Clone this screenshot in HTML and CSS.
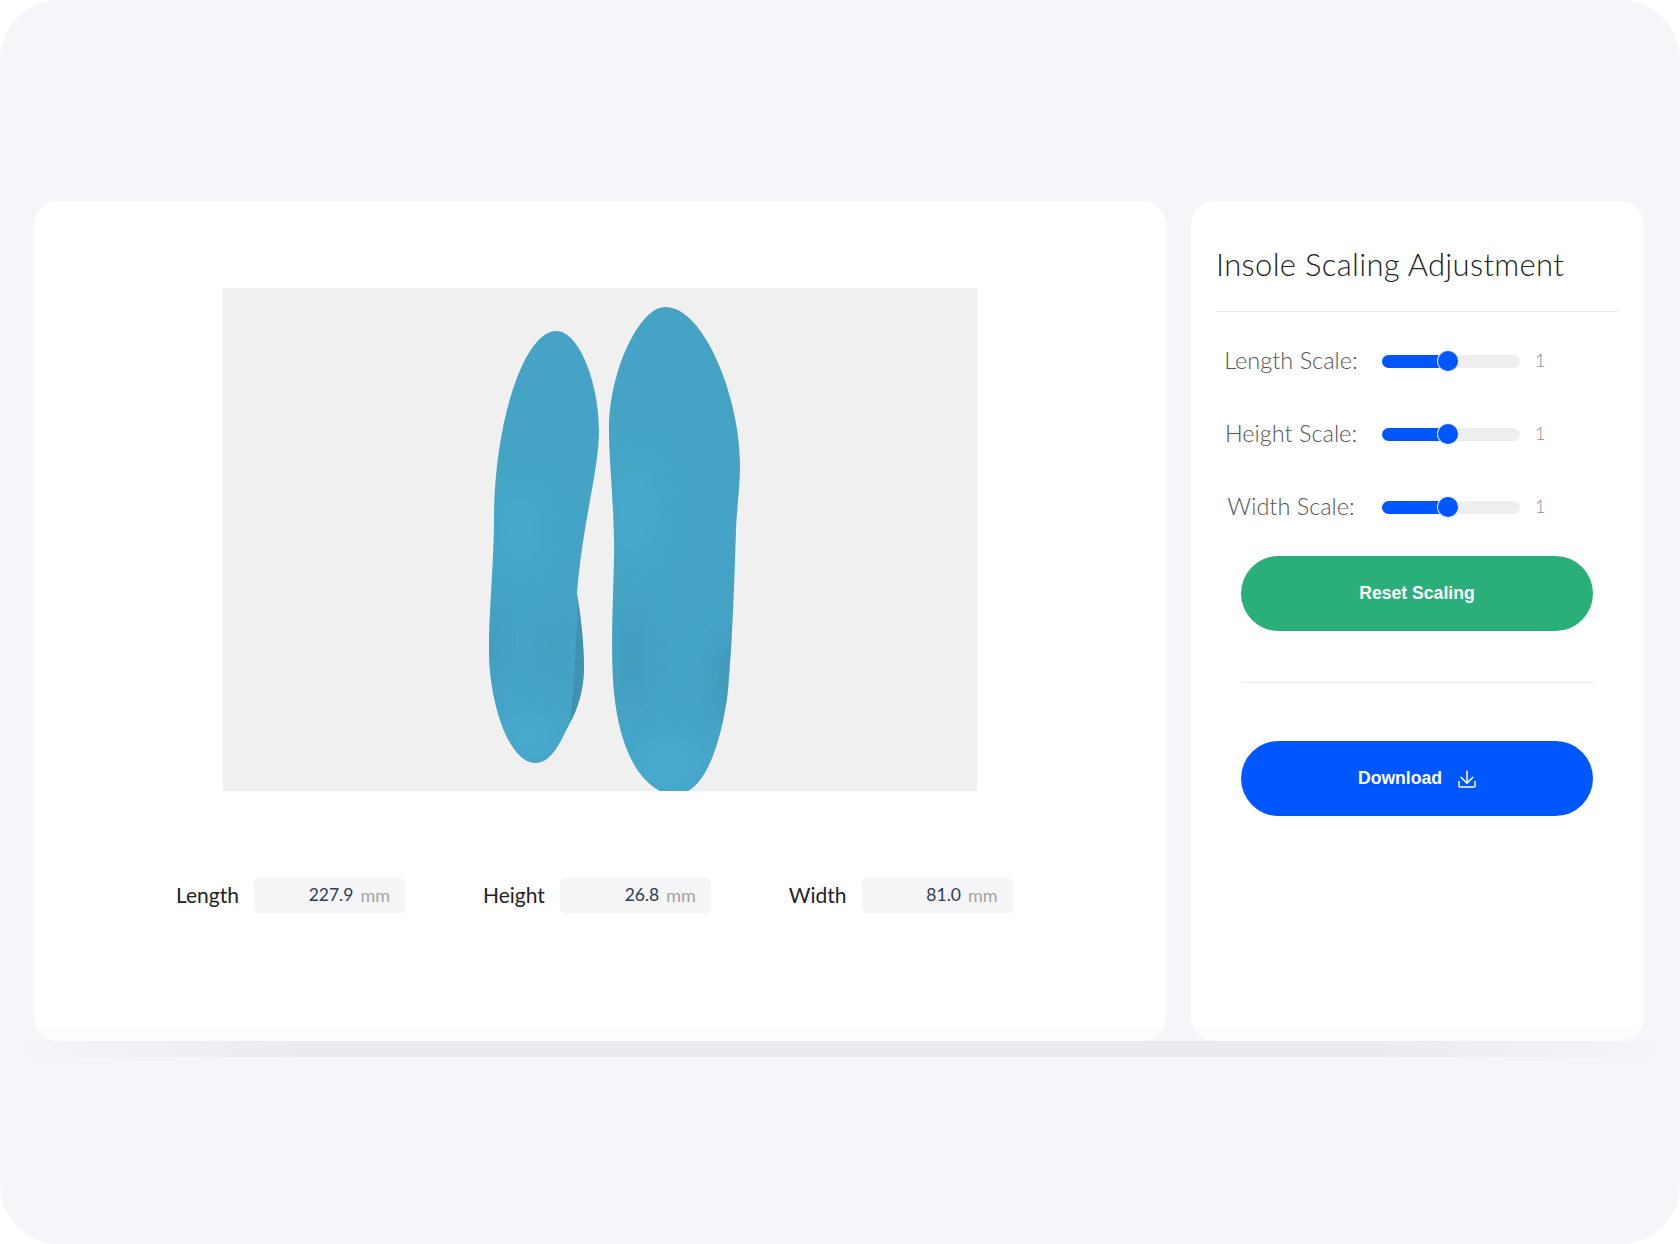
FILE: index.html
```html
<!DOCTYPE html>
<html lang="en">

<head>
    <meta charset="UTF-8" />
    <meta name="viewport" content="width=device-width, initial-scale=1.0" />
    <title>Insole Scaling</title>

    <!-- css -->

    <link rel="stylesheet" href="styles.css">

</head>

<body>
    <div class="frame">

        <main class="viewer-card">
            <div class="preview">
                <svg class="insoles" viewBox="223 288 754 503" width="754" height="503">
                    <defs>
                        <path id="soleLeft" d="M556 331 C580 331 599 385 599 430 C599 470 583 520 577 593 C580 610 584 640 584 667 C584 690 578 708 570 723 C560 742 552 763 535 763 C510 763 489 705 489 650 C489 610 494 560 494 520 C494 420 525 331 556 331 Z" />
                        <path id="soleRight" d="M665 307 C640 307 609 370 609 430 C609 465 615 510 614 560 C613 600 611 640 613 680 C616 730 630 775 660 791 L688 791 C708 780 722 740 728 690 C733 630 734 590 736 530 C737 505 740 490 740 463 C740 400 705 307 665 307 Z" />
                        <clipPath id="soleClip">
                            <use href="#soleLeft" />
                            <use href="#soleRight" />
                        </clipPath>
                        <filter id="soft" x="-50%" y="-50%" width="200%" height="200%">
                            <feGaussianBlur stdDeviation="14" />
                        </filter>
                    </defs>

                    <use href="#soleLeft" fill="#45a4c5" />
                    <use href="#soleRight" fill="#45a4c5" />

                    <!-- light and shade on the soles -->
                    <g clip-path="url(#soleClip)">
                        <g filter="url(#soft)">
                            <ellipse cx="635" cy="510" rx="22" ry="50" fill="#47a9cc" />
                            <ellipse cx="520" cy="530" rx="20" ry="40" fill="#47a9cc" />
                            <ellipse cx="632" cy="655" rx="16" ry="50" fill="#419cbd" />
                            <ellipse cx="732" cy="680" rx="16" ry="50" fill="#3f98b9" />
                            <ellipse cx="490" cy="640" rx="12" ry="40" fill="#419cbd" />
                            <ellipse cx="555" cy="650" rx="10" ry="40" fill="#419cbd" />
                            <ellipse cx="668" cy="765" rx="34" ry="26" fill="#48acd0" />
                            <ellipse cx="530" cy="735" rx="24" ry="20" fill="#48acd0" />
                        </g>
                        <!-- side wall of the left insole -->
                        <path fill="#3f93b0" d="M578 603 C581 620 584 645 584 667 C584 690 578 708 570 723 C573 700 574 680 575 660 C576 640 577 620 578 603 Z" />
                    </g>
                </svg>
            </div>

            <div class="measures">
                <div class="measure">
                    <span class="measure-label">Length</span>
                    <div class="measure-box"><span class="measure-value">227.9</span><span class="measure-unit">mm</span></div>
                </div>
                <div class="measure">
                    <span class="measure-label">Height</span>
                    <div class="measure-box"><span class="measure-value">26.8</span><span class="measure-unit">mm</span></div>
                </div>
                <div class="measure">
                    <span class="measure-label">Width</span>
                    <div class="measure-box"><span class="measure-value">81.0</span><span class="measure-unit">mm</span></div>
                </div>
            </div>
        </main>

        <aside class="side-card">
            <h1 class="side-title">Insole Scaling Adjustment</h1>

            <div class="scale-list">
                <div class="scale-row">
                    <span class="scale-label">Length Scale:</span>
                    <div class="slider"><div class="slider-fill"></div><span class="slider-thumb"></span></div>
                    <span class="scale-value">1</span>
                </div>
                <div class="scale-row">
                    <span class="scale-label">Height Scale:</span>
                    <div class="slider"><div class="slider-fill"></div><span class="slider-thumb"></span></div>
                    <span class="scale-value">1</span>
                </div>
                <div class="scale-row">
                    <span class="scale-label">Width Scale:</span>
                    <div class="slider"><div class="slider-fill"></div><span class="slider-thumb"></span></div>
                    <span class="scale-value">1</span>
                </div>
            </div>

            <div class="actions">
                <button class="pill pill-green">Reset Scaling</button>
                <hr class="actions-line">
                <button class="pill pill-blue">
                    Download
                    <svg class="pill-icon" viewBox="0 0 18 18" width="18" height="18" fill="none" stroke="#fff" stroke-width="1.5" stroke-linecap="round" stroke-linejoin="round">
                        <path d="M9 1 V13" />
                        <path d="M3.2 7.4 L9 13.2 L14.8 7.4" />
                        <path d="M1 11.5 V16 Q1 17 2 17 H16 Q17 17 17 16 V11.5" />
                    </svg>
                </button>
            </div>
        </aside>

    </div>
</body>

</html>
```

FILE: styles.css
```css
* {
    box-sizing: border-box;
}

body {
    margin: 0;
    background-color: #fff;
    font-family: "Lato", "Open Sans", sans-serif;
}

.frame {
    position: relative;
    display: flex;
    gap: 25px;
    width: 1680px;
    height: 1244px;
    padding: 201px 36px 203px 34px;
    background-color: #f4f6fa;
    border-radius: 60px;
    overflow: hidden;
}

/* soft shadow strip under the cards, cut off flat */
.frame::after {
    content: "";
    position: absolute;
    left: 0;
    right: 0;
    top: 1041px;
    height: 16px;
    background: linear-gradient(to right, rgba(225, 226, 230, 0), rgba(225, 226, 230, 0.55) 18%, rgba(225, 226, 230, 0.55) 82%, rgba(225, 226, 230, 0));
}

.viewer-card,
.side-card {
    position: relative;
    z-index: 1;
    background: linear-gradient(#fff calc(100% - 16px), #fcfcfc);
    border-radius: 24px;
}

.viewer-card {
    width: 1132px;
    padding-top: 87px;
}

.preview {
    width: 754px;
    height: 503px;
    margin: 0 auto;
    background-color: #f0f0f0;
}

.insoles {
    display: block;
}

.measures {
    display: flex;
    gap: 78px;
    margin-top: 87px;
    padding-left: 142px;
}

.measure {
    display: flex;
    align-items: center;
    gap: 15px;
}

.measure-label {
    padding-bottom: 2px;
    font-size: 21px;
    color: #222;
}

.measure-box {
    display: flex;
    justify-content: flex-end;
    align-items: center;
    gap: 7px;
    width: 151px;
    height: 35px;
    padding: 0 15px 2px 0;
    background-color: #f5f4f7;
    border-radius: 5px;
}

.measure-value {
    font-size: 17.5px;
    color: #2c3e55;
}

.measure-unit {
    font-size: 18px;
    color: #a3a3a3;
}

.side-card {
    width: 453px;
    padding: 0 25px;
}

.side-title {
    margin: 0;
    padding: 43px 0 27px;
    font-size: 31px;
    line-height: 40px;
    letter-spacing: 0.32px;
    font-weight: 300;
    color: #222;
    border-bottom: 1px solid #eeeeee;
}

.scale-list {
    display: flex;
    flex-direction: column;
    gap: 53px;
    padding-top: 38px;
}

.scale-row {
    display: flex;
    align-items: center;
    height: 20px;
}

.scale-label {
    width: 166px;
    padding-right: 16px;
    text-align: center;
    white-space: nowrap;
    font-size: 23.5px;
    font-weight: 300;
    color: #555;
}

.slider {
    position: relative;
    width: 138px;
    height: 13px;
    margin-top: 2px;
    background-color: #eeeeee;
    border-radius: 7px;
}

.slider-fill {
    width: 58px;
    height: 100%;
    background-color: #0057ff;
    border-radius: 7px 0 0 7px;
}

.slider-thumb {
    position: absolute;
    left: 56px;
    top: -4px;
    width: 20px;
    height: 20px;
    background-color: #0057ff;
    border-radius: 50%;
    box-shadow: 0 0 0 1px #e4ecfb;
}

.scale-value {
    margin-left: 15px;
    font-size: 18px;
    font-weight: 300;
    color: #8f8f8f;
}

.actions {
    display: flex;
    flex-direction: column;
    padding: 40px 25px 0;
}

.pill {
    display: flex;
    justify-content: center;
    align-items: center;
    gap: 16px;
    width: 352px;
    height: 75px;
    border: 0;
    border-radius: 38px;
    color: #fff;
    font-family: "Liberation Sans", Arial, sans-serif;
    font-size: 17.6px;
    font-weight: 700;
}

.pill-green {
    background-color: #2aae7a;
}

.pill-blue {
    background-color: #0057ff;
}

.actions-line {
    width: 100%;
    height: 1px;
    margin: 51px 0 58px;
    border: 0;
    background-color: #eeeeee;
}
```
